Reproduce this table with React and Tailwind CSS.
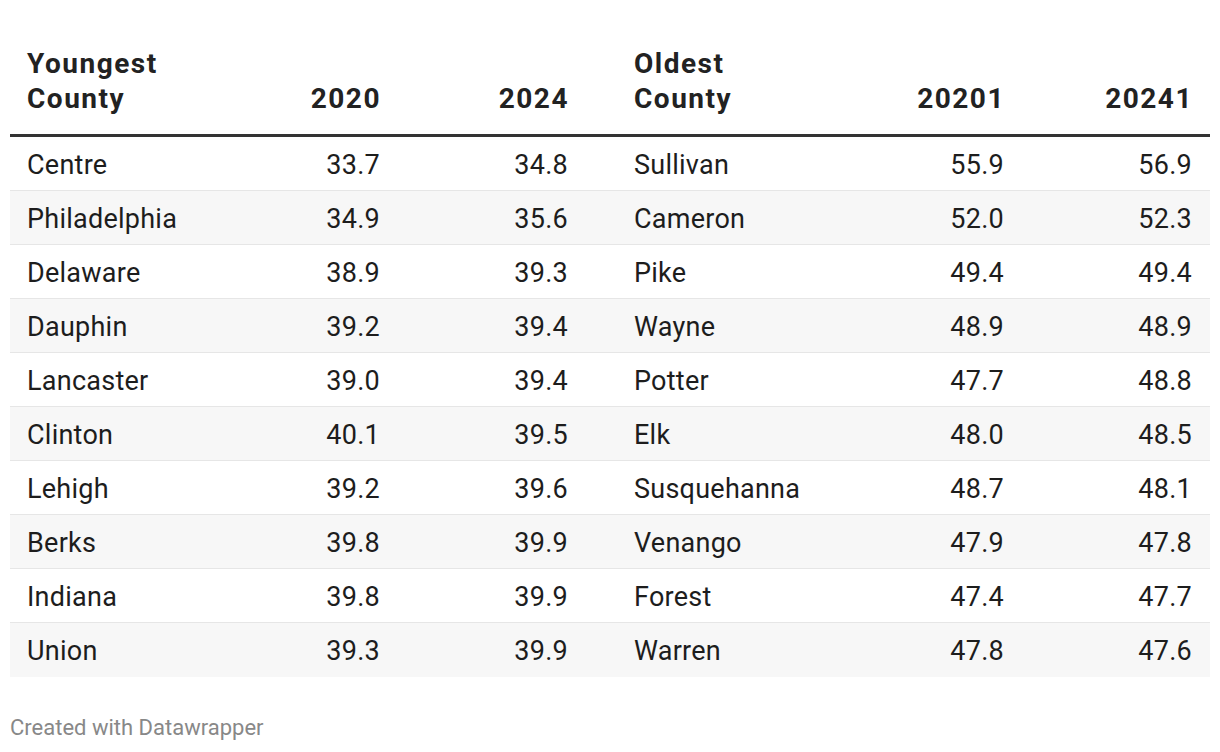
const ROWS = [
  ['Centre', '33.7', '34.8', 'Sullivan', '55.9', '56.9'],
  ['Philadelphia', '34.9', '35.6', 'Cameron', '52.0', '52.3'],
  ['Delaware', '38.9', '39.3', 'Pike', '49.4', '49.4'],
  ['Dauphin', '39.2', '39.4', 'Wayne', '48.9', '48.9'],
  ['Lancaster', '39.0', '39.4', 'Potter', '47.7', '48.8'],
  ['Clinton', '40.1', '39.5', 'Elk', '48.0', '48.5'],
  ['Lehigh', '39.2', '39.6', 'Susquehanna', '48.7', '48.1'],
  ['Berks', '39.8', '39.9', 'Venango', '47.9', '47.8'],
  ['Indiana', '39.8', '39.9', 'Forest', '47.4', '47.7'],
  ['Union', '39.3', '39.9', 'Warren', '47.8', '47.6'],
]

const GRID = 'grid grid-cols-[200px_187px_188px_248px_188px_189px]'

export default function App() {
  return (
    <div className="w-[1220px] h-[752px] bg-white px-[10px] pt-[46px] font-['Roboto',sans-serif] text-[#1d1d1d]">
      {/* header */}
      <div className={`${GRID} items-end pb-[18px] border-b-[3px] border-[#333] text-[28px] leading-[35px] tracking-[1.5px] font-bold text-[#222]`}>
        <div className="pl-[17px]">Youngest<br />County</div>
        <div className="pr-[16px] text-right">2020</div>
        <div className="pr-[16px] text-right">2024</div>
        <div className="pl-[49px]">Oldest<br />County</div>
        <div className="pr-[16px] text-right">20201</div>
        <div className="pr-[17px] text-right">20241</div>
      </div>

      {/* body */}
      <div>
        {ROWS.map((r, i) => (
          <div
            key={r[0]}
            className={`${GRID} h-[54px] items-center pt-[2px] text-[27px] leading-[28px] tracking-[0.25px] ${i % 2 ? 'bg-[#f7f7f7]' : 'bg-white'} ${i < ROWS.length - 1 ? 'border-b border-[#e6e6e6]' : ''}`}
          >
            <div className="pl-[17px]">{r[0]}</div>
            <div className="pr-[17px] text-right">{r[1]}</div>
            <div className="pr-[17px] text-right">{r[2]}</div>
            <div className="pl-[49px]">{r[3]}</div>
            <div className="pr-[17px] text-right">{r[4]}</div>
            <div className="pr-[18px] text-right">{r[5]}</div>
          </div>
        ))}
      </div>

      <div className="mt-[38px] text-[22px] leading-[26px] text-[#888]">Created with Datawrapper</div>
    </div>
  )
}
